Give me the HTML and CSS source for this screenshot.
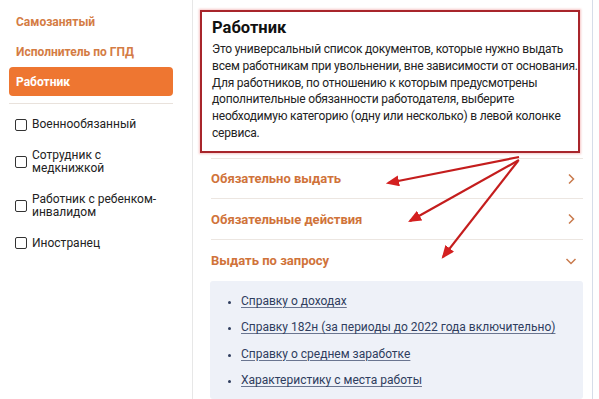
FILE: index.html
```html
<!DOCTYPE html>
<html lang="ru">
<head>
<meta charset="utf-8">
<link rel="stylesheet" href="styles.css">
</head>
<body>
<div class="page">
  <aside class="sidebar">
    <a class="nav-link">Самозанятый</a>
    <a class="nav-link">Исполнитель по ГПД</a>
    <a class="nav-link active">Работник</a>
    <div class="divider"></div>
    <label class="check"><span class="box"></span><span>Военнообязанный</span></label>
    <label class="check"><span class="box"></span><span>Сотрудник с<br>медкнижкой</span></label>
    <label class="check"><span class="box"></span><span>Работник с ребенком-<br>инвалидом</span></label>
    <label class="check"><span class="box"></span><span>Иностранец</span></label>
  </aside>
  <main class="main">
    <section class="intro">
      <h1 class="title">Работник</h1>
      <p class="desc">Это универсальный список документов, которые нужно выдать<br>всем работникам при увольнении, вне зависимости от основания.<br>Для работников, по отношению к которым предусмотрены<br>дополнительные обязанности работодателя, выберите<br>необходимую категорию (одну или несколько) в левой колонке<br>сервиса.</p>
    </section>
    <div class="acc-row first"><span>Обязательно выдать</span><svg class="chev" viewBox="0 0 12 12"><path d="M4 1.5 L8.5 6 L4 10.5"/></svg></div>
    <div class="acc-row"><span>Обязательные действия</span><svg class="chev" viewBox="0 0 12 12"><path d="M4 1.5 L8.5 6 L4 10.5"/></svg></div>
    <div class="acc-row open"><span>Выдать по запросу</span><svg class="chev" viewBox="0 0 12 12"><path d="M1.5 4 L6 8.5 L10.5 4"/></svg></div>
    <div class="panel">
      <ul class="links">
        <li><a>Справку о доходах</a></li>
        <li><a>Справку 182н (за периоды до 2022 года включительно)</a></li>
        <li><a>Справку о среднем заработке</a></li>
        <li><a>Характеристику с места работы</a></li>
      </ul>
    </div>
  </main>
  <svg class="arrows" width="599" height="399" viewBox="0 0 599 399">
    <defs>
      <marker id="ah" markerWidth="6" markerHeight="5" refX="5" refY="2.5" orient="auto" markerUnits="strokeWidth">
        <path d="M0 0 L6 2.5 L0 5 Z" fill="#d42020"/>
      </marker>
    </defs>
    <g stroke="#c41d1d" stroke-width="2.2" fill="none" marker-end="url(#ah)">
      <line x1="519" y1="157" x2="388" y2="183"/>
      <line x1="519" y1="160" x2="410" y2="221"/>
      <line x1="518" y1="161" x2="443" y2="257"/>
    </g>
  </svg>
</div>
</body>
</html>
```
FILE: styles.css
```css
* { box-sizing: border-box; }
html, body { margin: 0; padding: 0; }
body {
  width: 599px;
  height: 399px;
  overflow: hidden;
  background: #fff;
  font-family: "Roboto", "Noto Sans", sans-serif;
  color: #1d1d1f;
}
.page {
  position: relative;
  display: flex;
  height: 399px;
}
.sidebar {
  width: 193px;
  flex: none;
  padding: 7px 19px 0 9px;
  border-right: 1px solid #e7e7e7;
  display: flex;
  flex-direction: column;
}
.nav-link {
  display: flex;
  align-items: center;
  height: 29px;
  padding: 0 7px;
  margin-bottom: 1px;
  font-size: 12px;
  font-weight: 700;
  color: #d47c44;
  border-radius: 4px;
}
.nav-link.active {
  background: #ee7631;
  color: #fff;
}
.divider {
  height: 1px;
  background: #e9e2dc;
  margin: 6px 0 14px;
}
.check {
  display: flex;
  align-items: center;
  gap: 5px;
  font-size: 12px;
  line-height: 13.5px;
  color: #222;
  margin-left: 6px;
  margin-bottom: 17px;
}
.box {
  width: 12px;
  height: 12px;
  border: 1.3px solid #333;
  border-radius: 2px;
  flex: none;
}
.main {
  flex: 1;
  min-width: 0;
  padding: 10px 9px 0 7px;
  border-right: 1px solid #d6dde9;
  margin-right: 6px;
  display: flex;
  flex-direction: column;
}
.intro {
  border: 2px solid #a8252b;
  box-shadow: 0 0 2px 1px rgba(230, 90, 90, 0.35);
  padding: 6px 0 10px 10px;
  height: 143px;
  margin-right: 3px;
}
.title {
  margin: 0 0 3px;
  font-size: 16.5px;
  line-height: 20px;
  font-weight: 700;
  color: #111;
}
.desc {
  margin: 0;
  font-size: 12px;
  line-height: 16.8px;
  letter-spacing: -0.2px;
  white-space: nowrap;
  color: #222;
}
.acc-row {
  display: flex;
  align-items: center;
  justify-content: space-between;
  margin-left: 11px;
  height: 41px;
  border-bottom: 1px solid #ece6e1;
  font-size: 13px;
  font-weight: 700;
  color: #d0733a;
}
.acc-row.first { border-top: 1px solid #ece6e1; margin-top: 5px; }
.acc-row.open { border-bottom: none; }
.chev {
  width: 12px;
  height: 12px;
  margin-right: 6px;
  fill: none;
  stroke: #c97a4d;
  stroke-width: 1.5;
}
.panel {
  margin: 0 0 0 10px;
  background: #eef1f8;
  border-radius: 3px;
  flex: 1;
  padding: 12px 0 0 0;
}
.links {
  margin: 0;
  padding: 0 0 0 31px;
  list-style: disc;
  font-size: 12px;
  line-height: 16px;
  color: #2f3d5e;
}
.links li { margin-bottom: 10.4px; }
.links li::marker { font-size: 11px; }
.links a {
  color: #2f3d5e;
  text-decoration: underline;
  text-decoration-color: #6a7590;
  text-underline-offset: 2px;
}
.arrows {
  position: absolute;
  left: 0;
  top: 0;
  pointer-events: none;
}
```
